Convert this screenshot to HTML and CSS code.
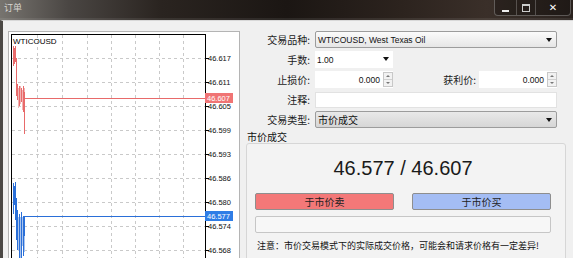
FILE: index.html
```html
<!DOCTYPE html>
<html lang="zh-CN">
<head>
    <meta charset="UTF-8">
    <title>订单</title>
    <link rel="stylesheet" href="styles.css">
</head>
<body>
    <div class="window">
        <div class="titlebar">
            <span class="title">订单</span>
            <div class="controls">
                <span class="ctl ctl-min"><i></i></span>
                <span class="ctl ctl-max"><i></i></span>
                <span class="ctl ctl-close">✕</span>
            </div>
        </div>

        <div class="content">
            <div class="chart">
                <svg width="232" height="227" viewBox="8 31 232 227">
                    <rect x="8.5" y="31.5" width="231" height="230" fill="#fff" stroke="#b4b4b4"/>
                    <g stroke="#c9c9c9" stroke-dasharray="3 3">
                        <path d="M37.5 35V258 M62.5 35V258 M87.5 35V258 M111.5 35V258 M135.5 35V258 M159.5 35V258 M183.5 35V258"/>
                        <path d="M12 58.5H205 M12 82.5H205 M12 106.5H205 M12 130.5H205 M12 154.5H205 M12 178.5H205 M12 202.5H205 M12 226.5H205 M12 250.5H205"/>
                    </g>
                    <rect x="11.5" y="34.5" width="194" height="230" fill="none" stroke="#000"/>
                    <path stroke="#000" d="M205 58.5h4 M205 82.5h4 M205 106.5h4 M205 130.5h4 M205 154.5h4 M205 178.5h4 M205 202.5h4 M205 226.5h4 M205 250.5h4"/>
                    <text x="13" y="44" class="sym">WTICOUSD</text>

                    <g stroke="#f2b4b4">
                        <path d="M18.5 88V108 M20.5 86V104 M22.5 90V110 M24.5 88V104"/>
                    </g>
                    <g stroke="#e86a6a" fill="none">
                        <path d="M13.5 46V66 M14.5 48V64 M15.5 46V62 M16.5 58V96 M17.5 84V100 M19.5 86V106 M21.5 88V102 M23.5 86V112 M24.5 92V134"/>
                        <path d="M24 98.5H205"/>
                    </g>
                    <rect x="205" y="93" width="28" height="10" fill="#f07474"/>
                    <text x="207" y="101" class="badge">46.607</text>

                    <g stroke="#a9c4ee">
                        <path d="M18.5 217V250 M20.5 217V258 M22.5 217V246 M24.5 217V252"/>
                    </g>
                    <g stroke="#2a6fd8" fill="none">
                        <path d="M13.5 183V214 M14.5 186V205 M15.5 182V220 M16.5 198V240 M17.5 210V250 M19.5 214V258 M21.5 212V258 M23.5 216V256 M24.5 217V236"/>
                        <path d="M24 216.5H205"/>
                    </g>
                    <rect x="205" y="211" width="28" height="10" fill="#2f7de6"/>
                    <text x="207" y="219" class="badge">46.577</text>

                    <g class="axis">
                        <text x="208" y="61">46.617</text>
                        <text x="208" y="85">46.611</text>
                        <text x="208" y="109">46.605</text>
                        <text x="208" y="133">46.599</text>
                        <text x="208" y="157">46.593</text>
                        <text x="208" y="181">46.586</text>
                        <text x="208" y="205">46.580</text>
                        <text x="208" y="229">46.574</text>
                        <text x="208" y="253">46.568</text>
                    </g>
                </svg>
            </div>

            <div class="order">
                <div class="fields">
                    <div class="row">
                        <label class="lbl">交易品种:</label>
                        <div class="select select-wide">
                            <span class="latin">WTICOUSD, West Texas Oil</span>
                            <span class="arrow"></span>
                        </div>
                    </div>
                    <div class="row">
                        <label class="lbl">手数:</label>
                        <div class="select select-plain">
                            <span class="latin">1.00</span>
                            <span class="arrow"></span>
                        </div>
                    </div>
                    <div class="row">
                        <label class="lbl">止损价:</label>
                        <div class="spin">
                            <span class="latin">0.000</span>
                            <span class="spin-btns"><i class="up"></i><i class="down"></i></span>
                        </div>
                        <label class="lbl lbl-mid">获利价:</label>
                        <div class="spin">
                            <span class="latin">0.000</span>
                            <span class="spin-btns"><i class="up"></i><i class="down"></i></span>
                        </div>
                    </div>
                    <div class="row">
                        <label class="lbl">注释:</label>
                        <div class="text-input"></div>
                    </div>
                    <div class="row">
                        <label class="lbl">交易类型:</label>
                        <div class="select select-gray">
                            <span>市价成交</span>
                            <span class="arrow"></span>
                        </div>
                    </div>
                </div>

                <div class="group-label">市价成交</div>
                <div class="group">
                    <div class="quote">46.577 / 46.607</div>
                    <div class="actions">
                        <button class="btn btn-sell">于市价卖</button>
                        <button class="btn btn-buy">于市价买</button>
                    </div>
                    <div class="progress"></div>
                    <p class="note">注意：市价交易模式下的实际成交价格，可能会和请求价格有一定差异!</p>
                </div>
            </div>
        </div>
    </div>
</body>
</html>
```

FILE: styles.css
```css
body {
    margin: 0;
    width: 573px;
    height: 258px;
    overflow: hidden;
    font-family: "Noto Sans CJK SC", "Liberation Sans", sans-serif;
    color: #111;
    background: #1f1a17;
}

.window {
    width: 573px;
    height: 258px;
    display: flex;
    flex-direction: column;
}

.titlebar {
    flex-shrink: 0;
    height: 20px;
    position: relative;
    background: linear-gradient(90deg, #77746f 0%, #4a4643 12%, #2a2420 28%, #1b1613 50%, #2c231e 70%, #3a2f29 85%, #2a221e 100%);
    box-shadow: inset 0 -2px 0 rgba(255, 255, 255, 0.08);
}

.title {
    position: absolute;
    left: 4px;
    top: 2px;
    font-size: 9px;
    line-height: 12px;
    color: #d8d4d0;
}

.controls {
    position: absolute;
    right: 2px;
    top: 0;
    height: 15px;
    display: flex;
    border: 1px solid rgba(200, 200, 200, 0.35);
    border-top: none;
    border-radius: 0 0 4px 4px;
    background: rgba(0, 0, 0, 0.25);
}

.ctl {
    display: flex;
    align-items: center;
    justify-content: center;
    height: 15px;
    color: #fff;
    font-size: 10px;
    font-weight: bold;
    font-family: "DejaVu Sans", sans-serif;
}

.ctl-min {
    width: 21px;
    border-right: 1px solid rgba(200, 200, 200, 0.3);
}

.ctl-min i {
    width: 7px;
    height: 2px;
    margin-top: 6px;
    background: #eee;
}

.ctl-max {
    width: 18px;
    border-right: 1px solid rgba(200, 200, 200, 0.3);
}

.ctl-max i {
    width: 6px;
    height: 5px;
    border: 1px solid #ccc;
    border-top-width: 2px;
}

.ctl-close {
    width: 34px;
}

.content {
    flex: 1;
    min-height: 0;
    overflow: hidden;
    display: flex;
    background: #f0f0f0;
    border-left: 3px solid #4b4845;
    border-top: 1px solid #d8d8d8;
    padding: 10px 0 0 5px;
}

.chart {
    width: 232px;
    height: 227px;
    flex-shrink: 0;
}

.chart svg {
    display: block;
}

.sym {
    font-family: "Liberation Sans", sans-serif;
    font-size: 8px;
    fill: #000;
}

.axis text {
    font-family: "Liberation Sans", sans-serif;
    font-size: 7.5px;
    fill: #111;
}

.badge {
    font-family: "Liberation Sans", sans-serif;
    font-size: 7.5px;
    fill: #fff;
}

.order {
    width: 325px;
    flex-shrink: 0;
    margin-left: 1px;
}

.fields {
    width: 316px;
    display: flex;
    flex-direction: column;
    gap: 3px;
}

.row {
    display: flex;
    align-items: center;
    height: 17px;
}

.lbl {
    width: 69px;
    margin-right: 5px;
    text-align: right;
    font-size: 10px;
    line-height: 17px;
    color: #1a1a1a;
}

.lbl-mid {
    width: 83px;
    margin-right: 3px;
}

.latin {
    font-family: "Liberation Sans", sans-serif;
    font-size: 8.5px;
}

.select {
    position: relative;
    height: 17px;
    box-sizing: border-box;
    display: flex;
    align-items: center;
    padding-left: 2px;
    font-size: 10px;
}

.select-wide {
    width: 242px;
    border: 1px solid #9c9c9c;
    border-radius: 2px;
    background: linear-gradient(#fbfbfb, #e6e6e6);
}

.select-plain {
    width: 78px;
    background: #fff;
}

.select-gray {
    width: 242px;
    border: 1px solid #9c9c9c;
    border-radius: 2px;
    background: linear-gradient(#e9e9e9, #d6d6d6);
}

.arrow {
    position: absolute;
    right: 4px;
    top: 6px;
    width: 0;
    height: 0;
    border-left: 3px solid transparent;
    border-right: 3px solid transparent;
    border-top: 4px solid #111;
}

.spin {
    width: 78px;
    height: 17px;
    box-sizing: border-box;
    background: #fff;
    display: flex;
    align-items: center;
    justify-content: flex-end;
}

.spin .latin {
    margin-right: 3px;
}

.spin-btns {
    width: 10px;
    height: 15px;
    display: flex;
    flex-direction: column;
    border: 1px solid #c8c8c8;
    box-sizing: border-box;
    background: #f2f2f2;
}

.spin-btns i {
    flex: 1;
    display: flex;
    justify-content: center;
    align-items: center;
}

.spin-btns i::after {
    content: "";
    border-left: 2px solid transparent;
    border-right: 2px solid transparent;
}

.spin-btns .up::after {
    border-bottom: 2px solid #777;
}

.spin-btns .down {
    border-top: 1px solid #d0d0d0;
}

.spin-btns .down::after {
    border-top: 2px solid #777;
}

.text-input {
    width: 242px;
    height: 16px;
    background: #fff;
    border: 1px solid #e2e2e2;
    box-sizing: border-box;
}

.group-label {
    margin: 3px 0 0 6px;
    font-size: 10px;
    line-height: 12px;
    height: 12px;
}

.group {
    margin-left: 5px;
    height: 120px;
    border: 1px solid #d6d6d6;
    border-radius: 3px;
    background: #f3f3f3;
    padding: 12px 14px 0 8px;
}

.quote {
    font-family: "Liberation Sans", sans-serif;
    font-size: 20px;
    line-height: 24px;
    text-align: center;
    color: #1a1a1a;
}

.actions {
    display: flex;
    justify-content: space-between;
    margin-top: 13px;
}

.btn {
    width: 139px;
    height: 17px;
    padding: 0;
    border: 1px solid #8e8e8e;
    border-radius: 2px;
    font-family: "Noto Sans CJK SC", sans-serif;
    font-size: 10px;
    line-height: 15px;
    color: #222;
}

.btn-sell {
    background: #f37878;
}

.btn-buy {
    background: #a4bdf4;
}

.progress {
    height: 17px;
    margin-top: 6px;
    box-sizing: border-box;
    border: 1px solid #c6c6c6;
    border-radius: 2px;
    background: #f7f7f7;
}

.note {
    margin: 6px 0 0 2px;
    font-size: 9px;
    line-height: 13px;
    color: #111;
}
```
